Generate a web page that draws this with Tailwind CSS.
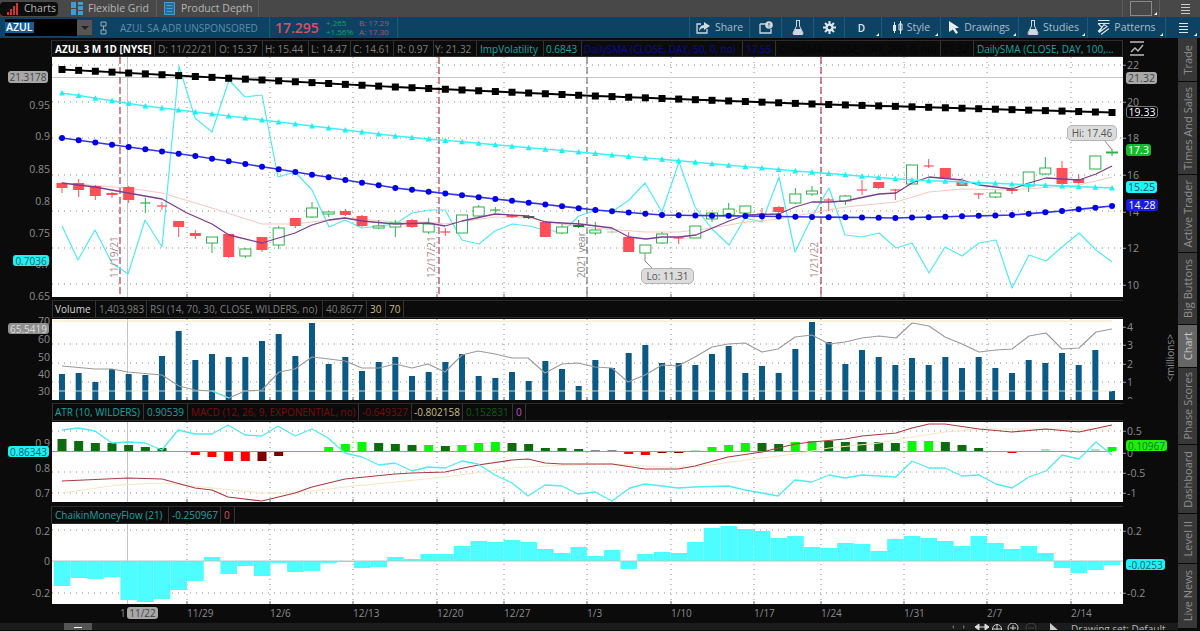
<!DOCTYPE html>
<html lang="en">
<head>
<meta charset="utf-8">
<title>Charts</title>
<script src="https://cdn.jsdelivr.net/npm/@tailwindcss/browser@4"></script>
</head>
<body class="w-[1200px] h-[631px] overflow-hidden bg-[#0b0b0b] font-['Open_Sans'] text-[10px] leading-none">

<!-- top tabs -->
<div class="flex items-center h-[17px] bg-[#484848] text-[#b5b5b5] text-[10.500px]">
  <div class="flex items-center gap-[5px] w-[58px] h-[14px] pl-[6px] bg-[#0d0d0d] rounded-[4px]">
    <svg class="w-[13px] h-[12px]" viewBox="0 0 13 12"><path d="M1 12V9h2v3zM4 12V6h2v6zM7 12V3h2v9zM10 12V0h2v12z" fill="#d9322e"/></svg>
    <span>Charts</span>
  </div>
  <div class="flex items-center gap-[5px] w-[99px] h-full pl-[13px] border-r border-[#5c5c5c]">
    <svg class="w-[12px] h-[13px]" viewBox="0 0 12 13"><path d="M0 0h5v6H0zM7 0h5v3H7zM7 4h5v4H7zM0 7h5v6H0zM7 9h5v4H7z" fill="#3d9ed6"/></svg>
    <span>Flexible Grid</span>
  </div>
  <div class="flex items-center gap-[6px] w-[102px] h-full pl-[7px] border-r border-[#5c5c5c]">
    <svg class="w-[11px] h-[13px]" viewBox="0 0 11 13"><path d="M.5.5h10v12H.5zM2.500 3.500h6M2.500 6.500h6M2.500 9.500h6" fill="#1f6f9f" stroke="#3d9ed6"/></svg>
    <span>Product Depth</span>
  </div>
  <div class="relative flex items-center justify-center ml-[863px] w-[38px] h-full border-x border-[#5c5c5c]">
    <div class="w-[22px] h-[15px] border border-[#8a8a8a]"></div>
    <div class="absolute right-[2px] bottom-[2px] w-0 h-0 border-l-[3px] border-l-transparent border-b-[3px] border-b-white"></div>
  </div>
  <div class="flex flex-col gap-[2px] ml-[21px] w-[9px]"><div class="h-px bg-[#ccc]"></div><div class="h-px bg-[#ccc]"></div><div class="h-px bg-[#ccc]"></div><div class="h-px bg-[#ccc]"></div></div>
</div>

<!-- symbol bar -->
<div class="flex items-center h-[21px] bg-[#0e4263] text-[#a9bdca] text-[10.500px]">
  <div class="flex items-center ml-[5px] w-[72px] h-[17px] bg-black"><span class="px-px bg-[#1b5c92] text-white font-semibold">AZUL</span></div>
  <div class="flex items-center justify-center w-[15px] h-[15px] bg-[#555]"><div class="w-0 h-0 border-x-[4px] border-x-transparent border-t-[4px] border-t-[#222]"></div></div>
  <svg class="ml-[8px] w-[7px] h-[14px]" viewBox="0 0 7 14"><path d="M1 1h5v4H1zM1 9h5v4H1zM3.500 5v4" fill="none" stroke="#9ab" stroke-width="1"/></svg>
  <div class="ml-[13px] w-[150px] h-[21px] flex items-center border-r border-[#225878] text-[#5d8dab] text-[10px] whitespace-nowrap">AZUL SA ADR UNSPONSORED</div>
  <div class="ml-[5px] w-[51px] text-[#d9505f] text-[14px] font-semibold">17.295</div>
  <div class="flex flex-col gap-px w-[33px] text-[8px] text-[#1f9d6a]"><span>+.265</span><span>+1.56%</span></div>
  <div class="flex flex-col gap-px w-[39px] h-[21px] justify-center border-r border-[#225878] text-[8px] text-[#a8566f]"><span>B: 17.29</span><span>A: 17.30</span></div>
  <div class="flex ml-auto h-full items-center">
    <div class="flex items-center justify-center gap-[5px] w-[61px] h-full border-x border-[#225878]">
      <svg class="w-[14px] h-[12px]" viewBox="0 0 14 12"><path d="M5 2H1v9h10V7" fill="none" stroke="#cfd8de" stroke-width="1.300"/><path d="M8 0l6 4-6 4V6C6 6 4 7 3 9c0-3 2-6 5-6z" fill="#cfd8de"/></svg>
      <span>Share</span>
    </div>
    <div class="flex items-center justify-center w-[32px] h-full border-r border-[#225878]">
      <svg class="w-[14px] h-[13px]" viewBox="0 0 14 13"><path d="M1 3h7M1 3v9h11V8" fill="none" stroke="#cfd8de" stroke-width="1.300"/><circle cx="10" cy="4" r="3.800" fill="#cfd8de"/><path d="M10 2v2.500M10 5.500v.8" stroke="#0e4263"/></svg>
    </div>
    <div class="flex items-center justify-center w-[32px] h-full border-r border-[#225878]">
      <svg class="w-[12px] h-[15px]" viewBox="0 0 12 15"><path d="M4 .5h4M4.500 1v5L1 13q0 1.500 1 1.500h8q1 0 1-1.500L7.500 6V1" fill="none" stroke="#cfd8de"/><path d="M3 9h6l2 5.500H1z" fill="#cfd8de"/></svg>
    </div>
    <div class="flex items-center justify-center w-[31px] h-full border-r border-[#225878]">
      <svg class="w-[13px] h-[13px]" viewBox="0 0 13 13"><path d="M6.500 0v13M0 6.500h13M2 2l9 9M11 2l-9 9" stroke="#dfe6ea" stroke-width="2"/><circle cx="6.500" cy="6.500" r="4" fill="#dfe6ea"/><circle cx="6.500" cy="6.500" r="1.800" fill="#0e4263"/></svg>
    </div>
    <div class="relative flex items-center justify-center w-[37px] h-full border-r border-[#225878] text-[#dfe6ea] font-semibold text-[10px] pr-[3px]">D<div class="absolute right-[2px] bottom-[2px] w-0 h-0 border-l-[3px] border-l-transparent border-b-[3px] border-b-white"></div></div>
    <div class="relative flex items-center justify-center gap-[4px] w-[59px] h-full border-r border-[#225878]">
      <svg class="w-[11px] h-[13px]" viewBox="0 0 11 13"><path d="M2.500 1v11" stroke="#dfe6ea"/><path d="M1 4h3v6H1z" fill="#dfe6ea"/><path d="M8.500 0v13" stroke="#dfe6ea"/><path d="M7 3h3v6H7z" fill="none" stroke="#dfe6ea"/></svg>
      <span>Style</span><div class="absolute right-[2px] bottom-[2px] w-0 h-0 border-l-[3px] border-l-transparent border-b-[3px] border-b-white"></div>
    </div>
    <div class="relative flex items-center justify-center gap-[5px] w-[78px] h-full border-r border-[#225878]">
      <svg class="w-[10px] h-[13px]" viewBox="0 0 10 13"><path d="M0 0l10 6.500-4 1 3 4-2 1.500-3-4.500L0 11z" fill="#e6edf0"/></svg>
      <span>Drawings</span><div class="absolute right-[2px] bottom-[2px] w-0 h-0 border-l-[3px] border-l-transparent border-b-[3px] border-b-white"></div>
    </div>
    <div class="relative flex items-center justify-center gap-[4px] w-[69px] h-full border-r border-[#225878]">
      <svg class="w-[12px] h-[15px]" viewBox="0 0 12 15"><path d="M4 .5h4M4.500 1v5L1 13q0 1.500 1 1.500h8q1 0 1-1.500L7.500 6V1" fill="none" stroke="#cfd8de"/><path d="M3 9h6l2 5.500H1z" fill="#cfd8de"/></svg>
      <span>Studies</span><div class="absolute right-[2px] bottom-[2px] w-0 h-0 border-l-[3px] border-l-transparent border-b-[3px] border-b-white"></div>
    </div>
    <div class="relative flex items-center justify-center gap-[4px] w-[78px] h-full border-r border-[#225878]">
      <svg class="w-[13px] h-[15px]" viewBox="0 0 13 15"><path d="M1 .5h11.500M1 3.500h11.500M1 3.500l4 4 2-3 3 2-8 6 3-5-4 4M4 14.500l8-6" fill="none" stroke="#dfe6ea" stroke-width="1.100"/></svg>
      <span>Patterns</span><div class="absolute right-[2px] bottom-[2px] w-0 h-0 border-l-[3px] border-l-transparent border-b-[3px] border-b-white"></div>
    </div>
    <div class="relative flex flex-col items-center justify-center gap-[2px] w-[34px] h-full">
      <div class="w-[9px] h-px bg-[#dfe6ea]"></div><div class="w-[9px] h-px bg-[#dfe6ea]"></div><div class="w-[9px] h-px bg-[#dfe6ea]"></div><div class="w-[9px] h-px bg-[#dfe6ea]"></div>
      <div class="absolute right-[3px] bottom-[2px] w-0 h-0 border-l-[3px] border-l-transparent border-b-[3px] border-b-white"></div>
    </div>
  </div>
</div>

<div class="flex h-[593px]">
  <!-- chart stack -->
  <div class="flex flex-col w-[1178px]">

    <!-- price header -->
    <div class="flex h-[17px] mt-[2px]">
      <div class="w-[51px]"></div>
      <div class="flex w-[1072px] h-full text-[#7d7d7d] border-y border-[#2c2c2c] whitespace-nowrap overflow-hidden">
        <div class="flex items-center w-[104px] pl-[3px] border-x border-[#333] text-white font-bold text-[10px]">AZUL 3 M 1D [NYSE]</div>
        <div class="flex items-center w-[61px] pl-[3px] border-r border-[#333]">D: 11/22/21</div>
        <div class="flex items-center w-[47px] pl-[3px] border-r border-[#333]">O: 15.37</div>
        <div class="flex items-center w-[46px] pl-[2px] border-r border-[#333]">H: 15.44</div>
        <div class="flex items-center w-[42px] pl-[2px] border-r border-[#333]">L: 14.47</div>
        <div class="flex items-center w-[43px] pl-[2px] border-r border-[#333]">C: 14.61</div>
        <div class="flex items-center w-[40px] pl-[3px] border-r border-[#333]">R: 0.97</div>
        <div class="flex items-center w-[43px] pl-[1px] border-r border-[#333]">Y: 21.32</div>
        <div class="flex items-center w-[67px] pl-[3px] border-r border-[#333] text-[#12a5a5]">ImpVolatility</div>
        <div class="flex items-center w-[38px] pl-[2px] border-r border-[#333] text-[#12a5a5]">0.6843</div>
        <div class="flex items-center w-[161px] pl-[2px] border-r border-[#333] text-[#0b0b96]">DailySMA (CLOSE, DAY, 50, 0, no)</div>
        <div class="flex items-center w-[33px] pl-[3px] border-r border-[#333] text-[#0b0b96]">17.55</div>
        <div class="flex items-center w-[165px] pl-[3px] border-r border-[#333] text-[#050505]">DailySMA (CLOSE, DAY, 200, 0, no)</div>
        <div class="flex items-center w-[33px] pl-[2px] border-r border-[#333] text-[#050505]">21.32</div>
        <div class="flex items-center flex-1 pl-[3px] border-r border-[#333] text-[#12a5a5]">DailySMA (CLOSE, DAY, 100,...</div>
      </div>
      <div class="flex items-center pl-[7px]">
        <svg class="w-[14px] h-[15px]" viewBox="0 0 14 15"><path d="M0 1h14M0 14h14M1 11l4-4 3 3 5-6" fill="none" stroke="#bdbdbd" stroke-width="1.300"/></svg>
      </div>
    </div>

    <!-- price panel -->
    <div class="flex h-[240px]">
      <div class="relative w-[52px] text-[#8c8c8c] text-[10.500px]">
        <div class="absolute right-[2px] top-[48px] -translate-y-1/2">0.95</div>
        <div class="absolute right-[2px] top-[79px] -translate-y-1/2">0.9</div>
        <div class="absolute right-[2px] top-[112px] -translate-y-1/2">0.85</div>
        <div class="absolute right-[2px] top-[144px] -translate-y-1/2">0.8</div>
        <div class="absolute right-[2px] top-[176px] -translate-y-1/2">0.75</div>
        <div class="absolute right-[2px] top-[207px] -translate-y-1/2">0.7</div>
        <div class="absolute right-[2px] top-[239px] -translate-y-1/2">0.65</div>
        <div class="absolute left-[8px] top-[14px] w-[40px] h-[12px] flex items-center justify-center rounded-[3px] bg-[#a8a8a8] text-[#444] text-[10px]">21.3178</div>
        <div class="absolute left-[13px] top-[198px] w-[36px] h-[11px] flex items-center justify-center rounded-[3px] bg-[#1ff0f5] text-[#166] text-[10px]">0.7036</div>
      </div>
      <div class="relative w-[1071px] bg-white overflow-hidden">
        <svg id="p1" class="absolute inset-0 w-full h-full" viewBox="52 57 1071 240">
          <g font-size="10" fill="#b08a8a">
            <text transform="translate(118,278) rotate(-90)">11/19/21</text>
            <text transform="translate(435,278) rotate(-90)">12/17/21</text>
            <text transform="translate(818,278) rotate(-90)">1/21/22</text>
            <text transform="translate(585,278) rotate(-90)" fill="#888">2021 year</text>
          </g>
        </svg>
        <div class="absolute left-[1015px] top-[68px] w-[50px] h-[16px] flex items-center justify-center rounded-[5px] bg-[#dcdcdc] border border-[#b5b5b5] text-[#555] text-[10px]">Hi: 17.46</div>
        <div class="absolute left-[589px] top-[211px] w-[53px] h-[16px] flex items-center justify-center rounded-[5px] bg-[#dcdcdc] border border-[#b5b5b5] text-[#555] text-[10px]">Lo: 11.31</div>
      </div>
      <div class="relative w-[55px] text-[#8c8c8c] text-[10.500px]">
        <div class="absolute left-0 top-[8px] -translate-y-1/2 flex items-center gap-[1px]"><span class="w-[3px] h-px bg-[#999]"></span><span>22</span></div>
        <div class="absolute left-0 top-[45px] -translate-y-1/2 flex items-center gap-[1px]"><span class="w-[3px] h-px bg-[#999]"></span><span>20</span></div>
        <div class="absolute left-0 top-[81px] -translate-y-1/2 flex items-center gap-[1px]"><span class="w-[3px] h-px bg-[#999]"></span><span>18</span></div>
        <div class="absolute left-0 top-[118px] -translate-y-1/2 flex items-center gap-[1px]"><span class="w-[3px] h-px bg-[#999]"></span><span>16</span></div>
        <div class="absolute left-0 top-[155px] -translate-y-1/2 flex items-center gap-[1px]"><span class="w-[3px] h-px bg-[#999]"></span><span>14</span></div>
        <div class="absolute left-0 top-[191px] -translate-y-1/2 flex items-center gap-[1px]"><span class="w-[3px] h-px bg-[#999]"></span><span>12</span></div>
        <div class="absolute left-0 top-[228px] -translate-y-1/2 flex items-center gap-[1px]"><span class="w-[3px] h-px bg-[#999]"></span><span>10</span></div>
        <div class="absolute left-[3px] top-[15px] w-[31px] h-[12px] flex items-center justify-center rounded-[3px] bg-[#a8a8a8] text-[#444] text-[10.500px]">21.32</div>
        <div class="absolute left-[3px] top-[49px] w-[32px] h-[12px] flex items-center justify-center rounded-[3px] bg-black border border-[#777] text-white text-[10.500px]">19.33</div>
        <div class="absolute left-[3px] top-[87px] w-[25px] h-[12px] flex items-center justify-center rounded-[3px] bg-[#16b82e] text-white text-[10.500px]">17.3</div>
        <div class="absolute left-[3px] top-[124px] w-[31px] h-[12px] flex items-center justify-center rounded-[3px] bg-[#1ff5f5] text-[#156] text-[10.500px]">15.25</div>
        <div class="absolute left-[3px] top-[142px] w-[32px] h-[12px] flex items-center justify-center rounded-[3px] bg-[#1a1ae6] text-white text-[10.500px]">14.28</div>
      </div>
    </div>

    <!-- volume header -->
    <div class="flex h-[18px] mt-[3px]">
      <div class="w-[52px]"></div>
      <div class="flex w-[1071px] h-full text-[#7d7d7d] border-y border-[#2c2c2c] whitespace-nowrap">
        <div class="flex items-center w-[44px] pl-[2px] border-x border-[#333] text-[#d5d5d5]">Volume</div>
        <div class="flex items-center w-[51px] pl-[3px] border-r border-[#333]">1,403,983</div>
        <div class="flex items-center w-[176px] pl-[3px] border-r border-[#333]">RSI (14, 70, 30, CLOSE, WILDERS, no)</div>
        <div class="flex items-center w-[44px] pl-[3px] border-r border-[#333]">40.8677</div>
        <div class="flex items-center w-[19px] pl-[3px] border-r border-[#333] text-[#c8bd85]">30</div>
        <div class="flex items-center w-[18px] pl-[3px] border-r border-[#333] text-[#c8bd85]">70</div>
      </div>
    </div>

    <!-- volume panel -->
    <div class="flex h-[81px] mt-[1px]">
      <div class="relative w-[52px] text-[#8c8c8c] text-[10.500px]">
        <div class="absolute right-[2px] top-[2px] -translate-y-1/2">70</div>
        <div class="absolute right-[2px] top-[20px] -translate-y-1/2">60</div>
        <div class="absolute right-[2px] top-[38px] -translate-y-1/2">50</div>
        <div class="absolute right-[2px] top-[55px] -translate-y-1/2">40</div>
        <div class="absolute right-[2px] top-[72px] -translate-y-1/2">30</div>
        <div class="absolute left-[8px] top-[4px] w-[41px] h-[11px] flex items-center justify-center rounded-[3px] bg-[#8f8f8f] text-[#ddd] text-[10px]">65.5419</div>
      </div>
      <div class="relative w-[1071px] bg-white overflow-hidden"><svg id="p2" class="absolute inset-0 w-full h-full" viewBox="52 319 1071 81"></svg></div>
      <div class="relative w-[55px] text-[#8c8c8c] text-[10.500px]">
        <div class="absolute left-0 top-[8px] -translate-y-1/2 flex items-center gap-[1px]"><span class="w-[3px] h-px bg-[#999]"></span><span>4</span></div>
        <div class="absolute left-0 top-[26px] -translate-y-1/2 flex items-center gap-[1px]"><span class="w-[3px] h-px bg-[#999]"></span><span>3</span></div>
        <div class="absolute left-0 top-[45px] -translate-y-1/2 flex items-center gap-[1px]"><span class="w-[3px] h-px bg-[#999]"></span><span>2</span></div>
        <div class="absolute left-0 top-[63px] -translate-y-1/2 flex items-center gap-[1px]"><span class="w-[3px] h-px bg-[#999]"></span><span>1</span></div>
        <div class="absolute left-[4px] top-[77px] h-[3px] overflow-hidden">0</div>
        <div class="absolute left-[42px] top-[15px] [writing-mode:vertical-rl] rotate-180 text-[10px]">&lt;millions&gt;</div>
      </div>
    </div>

    <!-- ATR header -->
    <div class="flex h-[18px] mt-[3px]">
      <div class="w-[52px]"></div>
      <div class="flex w-[1071px] h-full text-[#7d7d7d] border-y border-[#2c2c2c] whitespace-nowrap">
        <div class="flex items-center w-[92px] pl-[2px] border-x border-[#333] text-[#12a5a5]">ATR (10, WILDERS)</div>
        <div class="flex items-center w-[44px] pl-[3px] border-r border-[#333] text-[#12a5a5]">0.90539</div>
        <div class="flex items-center w-[171px] pl-[3px] border-r border-[#333] text-[#7a0c0c]">MACD (12, 26, 9, EXPONENTIAL, no)</div>
        <div class="flex items-center w-[53px] pl-[3px] border-r border-[#333] text-[#7a0c0c]">-0.649327</div>
        <div class="flex items-center w-[51px] pl-[2px] border-r border-[#333] text-[#c8bd85]">-0.802158</div>
        <div class="flex items-center w-[50px] pl-[3px] border-r border-[#333] text-[#0f5c14]">0.152831</div>
        <div class="flex items-center w-[13px] pl-[3px] border-r border-[#333] text-[#c255c2]">0</div>
      </div>
    </div>

    <!-- ATR panel -->
    <div class="flex h-[80px] mt-[1px]">
      <div class="relative w-[52px] text-[#8c8c8c] text-[10.500px]">
        <div class="absolute right-[2px] top-[21px] -translate-y-1/2">0.9</div>
        <div class="absolute right-[2px] top-[46px] -translate-y-1/2">0.8</div>
        <div class="absolute right-[2px] top-[71px] -translate-y-1/2">0.7</div>
        <div class="absolute left-[8px] top-[24px] w-[41px] h-[11px] flex items-center justify-center rounded-[3px] bg-[#1ff0f5] text-[#166] text-[10px]">0.86343</div>
      </div>
      <div class="relative w-[1071px] bg-white overflow-hidden"><svg id="p3" class="absolute inset-0 w-full h-full" viewBox="52 422 1071 80"></svg></div>
      <div class="relative w-[55px] text-[#8c8c8c] text-[10.500px]">
        <div class="absolute left-0 top-[9px] -translate-y-1/2 flex items-center gap-[1px]"><span class="w-[3px] h-px bg-[#999]"></span><span>0.5</span></div>
        <div class="absolute left-0 top-[31px] -translate-y-1/2 flex items-center gap-[1px]"><span class="w-[3px] h-px bg-[#999]"></span><span>0</span></div>
        <div class="absolute left-0 top-[51px] -translate-y-1/2 flex items-center gap-[1px]"><span class="w-[3px] h-px bg-[#999]"></span><span>-0.5</span></div>
        <div class="absolute left-0 top-[71px] -translate-y-1/2 flex items-center gap-[1px]"><span class="w-[3px] h-px bg-[#999]"></span><span>-1</span></div>
        <div class="absolute left-[3px] top-[18px] w-[41px] h-[11px] flex items-center justify-center rounded-[3px] bg-[#22ee00] text-[#174] text-[10px]">0.10967</div>
      </div>
    </div>

    <!-- CMF header -->
    <div class="flex h-[18px] mt-[4px]">
      <div class="w-[51px]"></div>
      <div class="flex w-[1072px] h-full text-[#12a5a5] border-y border-[#2c2c2c] whitespace-nowrap">
        <div class="flex items-center w-[118px] pl-[3px] border-x border-[#333]">ChaikinMoneyFlow (21)</div>
        <div class="flex items-center w-[52px] pl-[3px] border-r border-[#333]">-0.250967</div>
        <div class="flex items-center w-[14px] pl-[3px] border-r border-[#333] text-[#d9505f]">0</div>
      </div>
    </div>

    <!-- CMF panel -->
    <div class="flex h-[80px]">
      <div class="relative w-[52px] text-[#8c8c8c] text-[10.500px]">
        <div class="absolute right-[2px] top-[7px] -translate-y-1/2">0.2</div>
        <div class="absolute right-[2px] top-[37px] -translate-y-1/2">0</div>
        <div class="absolute right-[2px] top-[69px] -translate-y-1/2">-0.2</div>
      </div>
      <div class="relative w-[1071px] bg-white overflow-hidden"><svg id="p4" class="absolute inset-0 w-full h-full" viewBox="52 524 1071 80"></svg></div>
      <div class="relative w-[55px] text-[#8c8c8c] text-[10.500px]">
        <div class="absolute left-0 top-[7px] -translate-y-1/2 flex items-center gap-[1px]"><span class="w-[3px] h-px bg-[#999]"></span><span>0.2</span></div>
        <div class="absolute left-0 top-[69px] -translate-y-1/2 flex items-center gap-[1px]"><span class="w-[3px] h-px bg-[#999]"></span><span>-0.2</span></div>
        <div class="absolute left-[3px] top-[35px] w-[39px] h-[11px] flex items-center justify-center rounded-[3px] bg-[#1ff0f5] text-[#166] text-[10px]">-0.0253</div>
      </div>
    </div>

    <!-- date axis -->
    <div class="relative h-[19px] text-[#8c8c8c] text-[10px]">
      <span class="absolute left-[120px] top-[4px]">1</span>
      <span class="absolute left-[127px] top-[3px] w-[31px] h-[12px] flex items-center justify-center rounded-[3px] bg-[#a8a8a8] text-[#444]">11/22</span>
      <span class="absolute left-[187px] top-[4px]">11/29</span>
      <span class="absolute left-[270px] top-[4px]">12/6</span>
      <span class="absolute left-[353px] top-[4px]">12/13</span>
      <span class="absolute left-[437px] top-[4px]">12/20</span>
      <span class="absolute left-[504px] top-[4px]">12/27</span>
      <span class="absolute left-[587px] top-[4px]">1/3</span>
      <span class="absolute left-[671px] top-[4px]">1/10</span>
      <span class="absolute left-[754px] top-[4px]">1/17</span>
      <span class="absolute left-[821px] top-[4px]">1/24</span>
      <span class="absolute left-[904px] top-[4px]">1/31</span>
      <span class="absolute left-[987px] top-[4px]">2/7</span>
      <span class="absolute left-[1071px] top-[4px]">2/14</span>
    </div>

    <!-- bottom bar -->
    <div class="flex items-start h-[7px] bg-[#1c1c1c] text-[#b5b5b5] overflow-hidden">
      <div class="flex items-center justify-center ml-[64px] w-[28px] h-[8px] bg-[#555]"><div class="w-[8px] h-px bg-white"></div></div>
      <svg class="ml-[860px] w-[116px] h-[8px]" viewBox="0 0 116 8"><path d="M2 2L0 4l2 2zM11 2l2 2-2 2z" fill="#666"/><path d="M24 4h12M27 1L23 4l4 3zM33 1l4 3-4 3z" fill="#ddd" stroke="#ddd"/><circle cx="45" cy="6" r="4.500" fill="none" stroke="#ccc"/><path d="M45 1v10M40 6h10" stroke="#ccc"/><circle cx="61" cy="5" r="5" fill="none" stroke="#ccc"/><path d="M61 2v6M58 5h6" stroke="#ccc"/><circle cx="79" cy="5" r="5" fill="none" stroke="#444"/><path d="M76 5h6" stroke="#444"/><path d="M98 0l9 8H98z" fill="#ccc"/></svg>
      <span class="ml-[3px] mt-[1px] text-[10px] whitespace-nowrap">Drawing set: Default</span>
    </div>
  </div>

  <!-- right tabs -->
  <div class="flex flex-col w-[19px] h-[590px] gap-px text-[#8f8f8f] text-[11px] whitespace-nowrap">
    <div class="flex items-center justify-center h-[43px] bg-[#383838]"><span class="[writing-mode:vertical-rl] rotate-180">Trade</span></div>
    <div class="flex items-center justify-center h-[92px] bg-[#383838]"><span class="[writing-mode:vertical-rl] rotate-180">Times And Sales</span></div>
    <div class="flex items-center justify-center h-[77px] bg-[#383838]"><span class="[writing-mode:vertical-rl] rotate-180">Active Trader</span></div>
    <div class="flex items-center justify-center h-[71px] bg-[#383838]"><span class="[writing-mode:vertical-rl] rotate-180">Big Buttons</span></div>
    <div class="flex items-center justify-center h-[42px] bg-[#666] text-[#c8c8c8]"><span class="[writing-mode:vertical-rl] rotate-180">Chart</span></div>
    <div class="flex items-center justify-center h-[76px] bg-[#383838]"><span class="[writing-mode:vertical-rl] rotate-180">Phase Scores</span></div>
    <div class="flex items-center justify-center h-[68px] bg-[#383838]"><span class="[writing-mode:vertical-rl] rotate-180">Dashboard</span></div>
    <div class="flex items-center justify-center h-[49px] bg-[#383838]"><span class="[writing-mode:vertical-rl] rotate-180">Level II</span></div>
    <div class="flex items-center justify-center h-[64px] bg-[#383838]"><span class="[writing-mode:vertical-rl] rotate-180">Live News</span></div>
  </div>
</div>

<script>
const X=i=>62+i*16.667, GX=[187,270,353,437,504,587,671,754,821,904,987,1071];
const interp=(p)=>{const o=[];for(let i=0;i<64;i++){let k=0;while(k<p.length-2&&p[k+1][0]<i)k++;const a=p[k],b=p[k+1];o.push(a[1]+(b[1]-a[1])*(i-a[0])/(b[0]-a[0]));}return o;};
const pl=(pts,c,w,extra='')=>`<polyline fill="none" stroke="${c}" stroke-width="${w}" stroke-linejoin="round" ${extra} points="${pts.map(p=>p.join(',')).join(' ')}"/>`;
const grid=(y0,y1,hs)=>{let s='';hs.forEach(y=>s+=`<line x1="52" x2="1123" y1="${y}" y2="${y}" stroke="#8f8f8f" stroke-dasharray="1 5"/>`);GX.forEach(x=>s+=`<line x1="${x}" x2="${x}" y1="${y0}" y2="${y1}" stroke="#8f8f8f" stroke-dasharray="1 4"/><line x1="${x}" x2="${x}" y1="${y1-3}" y2="${y1}" stroke="#666"/>`);s+=`<line x1="127.500" x2="127.500" y1="${y0}" y2="${y1}" stroke="#c4c4c4"/>`;return s;};

/* price panel */
const c=[[183,188,182,193,'r'],[183,190,179,197,'r'],[186,196,185,200,'r'],[193,195,192,198,'r'],[187,200,186,203,'r'],[203,203,198,213,'g'],[206,206,202,210,'r'],[221,227,221,237,'r'],[233,236,230,239,'r'],[237,243,237,253,'g'],[234,257,234,258,'r'],[249,256,248,258,'g'],[237,250,237,252,'r'],[228,245,226,249,'g'],[218,226,218,228,'r'],[208,217,202,218,'g'],[212,214,211,217,'g'],[211,215,209,216,'r'],[216,226,215,227,'r'],[226,228,220,229,'g'],[223,227,220,237,'g'],[220,227,219,228,'r'],[224,232,218,234,'g'],[232,232,228,236,'r'],[215,233,215,233,'g'],[207,216,205,217,'g'],[210,210,207,213,'g'],[215,217,214,218,'r'],[216,218,215,219,'d'],[222,237,221,237,'r'],[227,233,224,234,'g'],[225,227,220,228,'d'],[230,233,222,235,'g'],[232,232,229,234,'p'],[237,252,232,252,'r'],[245,253,245,253,'g'],[234,243,232,244,'g'],[238,238,237,244,'r'],[226,238,226,238,'g'],[213,219,213,222,'g'],[209,215,203,217,'g'],[206,213,206,216,'g'],[214,214,208,220,'r'],[207,212,206,213,'r'],[194,203,188,204,'g'],[191,194,186,196,'g'],[200,200,198,211,'r'],[196,201,195,205,'g'],[190,190,180,195,'r'],[182,188,182,189,'r'],[190,190,189,200,'r'],[165,184,165,184,'g'],[166,166,159,168,'r'],[168,179,168,180,'r'],[182,186,178,186,'r'],[194,194,193,199,'r'],[193,197,190,198,'g'],[189,191,187,194,'r'],[172,186,172,192,'g'],[168,174,157,175,'g'],[168,184,161,184,'r'],[179,183,174,184,'r'],[156,169,156,169,'g'],[152,153,149,156,'g']];
const black=interp([[0,69.5],[20,87],[32,96],[45,104],[63,112.500]]),tri=interp([[0,93],[5,106],[20,136],[44,171],[51,180],[63,188]]),blue=interp([[0,138],[8,156],[20,188],[32,210],[36,215],[50,218],[57,215],[60,211],[63,206]]);
const iv=[[62,226],[78,260],[95,230],[112,263],[128,274],[145,220],[162,247],[179,66],[195,118],[212,132],[229,80],[245,97],[262,95],[278,177],[295,172],[312,190],[329,227],[345,220],[362,228],[379,226],[395,224],[412,213],[429,210],[445,210],[462,240],[479,244],[495,231],[512,224],[529,226],[545,230],[562,232],[579,216],[596,210],[612,212],[629,200],[645,183],[662,212],[679,162],[695,207],[712,229],[729,245],[745,218],[762,222],[779,177],[795,252],[812,217],[829,188],[845,235],[862,237],[879,233],[896,248],[912,243],[929,273],[945,247],[962,256],[979,243],[996,240],[1012,288],[1029,255],[1046,261],[1062,247],[1079,233],[1096,250],[1112,262]];
const pur=[[62,183],[95,187],[128,193],[162,199],[187,213],[212,224],[229,235],[262,243],[295,233],[312,225],[329,220],[345,218],[362,221],[395,224],[428,223],[445,226],[462,221],[495,214],[528,216],[545,222],[580,224],[612,228],[629,237],[646,239],[662,237],[679,237],[696,235],[729,221],[746,215],[779,214],[795,207],[812,202],[829,202],[845,201],[879,194],[896,193],[912,183],[929,177],[962,180],[979,185],[1012,189],[1029,183],[1046,178],[1079,180],[1096,174],[1112,166]];
const pink=[[62,183],[128,188],[162,193],[212,208],[262,224],[295,224],[345,218],[395,222],[428,222],[445,224],[495,217],[528,218],[580,227],[645,232],[679,232],[712,228],[746,222],[779,219],[845,207],[896,202],[929,192],[962,189],[1012,190],[1079,185],[1112,177]];
let s=grid(57,297,[65,102,138,175,211,248,284]);
s+=`<line x1="52" x2="1123" y1="77.500" y2="77.500" stroke="#c8c8c8"/>`;
[[120,'#b23a48'],[439,'#b23a48'],[821,'#b23a48'],[587,'#777']].forEach(([x,k])=>s+=`<line x1="${x}" x2="${x}" y1="57" y2="297" stroke="${k}" stroke-width="1.200" stroke-dasharray="7 3"/>`);
s+=pl(iv,'#52eaf2',1.200)+pl(pink,'#f6c9c3',1);
c.forEach((d,i)=>{const x=X(i),k={r:'#ff4f57',g:'#2fb04c',d:'#1d7a33',p:'#a9d8b2'}[d[4]];
  s+=`<line x1="${x}" x2="${x}" y1="${d[2]}" y2="${d[3]}" stroke="${k}" stroke-width="1"/>`;
  if(d[0]===d[1]) s+=`<line x1="${x-5}" x2="${x+5}" y1="${d[0]}" y2="${d[0]}" stroke="${k}" stroke-width="1.200"/>`;
  else if(d[4]==='g') s+=`<rect x="${x-5.500}" y="${d[0]}" width="11" height="${d[1]-d[0]}" fill="#fff" stroke="${k}"/>`;
  else s+=`<rect x="${x-5.500}" y="${d[0]}" width="11" height="${d[1]-d[0]}" fill="${k}"/>`;});
s+=pl(pur,'#7a3f8e',1.300);
s+=pl(tri.map((y,i)=>[X(i),y]),'#45eef5',1.500);
tri.forEach((y,i)=>s+=`<path d="M${X(i)-3} ${y+2.500}h6l-3-5.500z" fill="#1ff0f5"/>`);
s+=pl(blue.map((y,i)=>[X(i),y]),'#3535e0',1.600);
blue.forEach((y,i)=>s+=`<circle cx="${X(i)}" cy="${y}" r="3" fill="#0000e6"/>`);
s+=pl(black.map((y,i)=>[X(i),y]),'#000',2);
black.forEach((y,i)=>s+=`<rect x="${X(i)-3.500}" y="${y-3.500}" width="7" height="7" fill="#000"/>`);
s+=`<path d="M645 253v8l7 7M1105 141l7 9" fill="none" stroke="#8a8a8a"/>`;
document.getElementById('p1').insertAdjacentHTML('afterbegin',s);

/* volume panel */
const vol=[374,373,382,369,374,375,356,331,360,354,357,357,341,334,356,323,364,357,371,362,357,376,372,362,354,376,378,372,381,361,369,386,360,368,353,345,363,363,365,354,346,373,366,373,349,322,342,364,350,357,365,358,365,357,368,357,368,373,360,363,353,365,350,391];
const rsi=[[62,366],[95,369],[112,369],[128,372],[162,375],[179,386],[195,390],[212,391],[229,398],[245,391],[262,390],[279,372],[295,369],[312,357],[329,359],[345,361],[362,368],[379,368],[395,364],[412,368],[428,364],[445,372],[462,355],[478,351],[495,354],[512,358],[528,358],[545,373],[562,364],[578,363],[595,367],[612,368],[628,382],[645,375],[662,365],[678,366],[695,357],[712,347],[728,344],[745,343],[762,352],[778,349],[795,337],[812,335],[829,344],[845,342],[862,338],[879,336],[896,338],[912,323],[929,326],[945,337],[962,344],[979,352],[996,350],[1012,349],[1029,336],[1046,333],[1062,349],[1079,348],[1096,332],[1112,329]];
s=grid(319,400,[344,363,382]);
vol.forEach((y,i)=>s+=`<rect x="${X(i)-3}" y="${y}" width="6" height="${400-y}" fill="#0b5a86"/>`);
s+=`<line x1="52" x2="1112" y1="321" y2="321" stroke="#f3e6bd"/><line x1="52" x2="1112" y1="391" y2="391" stroke="#f3e6bd" stroke-opacity=".85"/>`;
s+=pl(rsi,'#9a9a9a',1.100)+pl([[212,391],[229,398]],'#52eaf2',1.100);
document.getElementById('p2').insertAdjacentHTML('afterbegin',s);

/* ATR / MACD panel */
const B='#0f6b0f',L='#0cf40c',R='#f00',D='#7a0000',P='#b8e0b8',G='#888';
const h=[[439,B],[441,B],[443,B],[443,B],[445,B],[447,B],[448,B],[452,R],[455,R],[457,R],[461,R],[461,R],[461,D],[456,D],[452,D],[451,G],[447,L],[444,L],[442,L],[443,B],[444,B],[445,B],[445,L],[446,B],[445,L],[443,L],[442,L],[443,B],[444,B],[448,B],[448,B],[449,B],[450,G],[450,G],[454,R],[455,R],[453,D],[453,D],[450,P],[447,L],[445,L],[443,L],[443,B],[444,B],[442,L],[441,L],[441,B],[442,B],[442,B],[442,B],[443,B],[441,L],[441,L],[442,B],[445,B],[448,B],[451,G],[453,R],[451,G],[449,P],[451,G],[452,R],[449,P],[447,L]];
const atr=[[62,430],[78,428],[95,431],[112,443],[128,442],[145,443],[162,450],[178,430],[195,434],[212,434],[228,425],[245,435],[262,436],[278,426],[295,436],[312,429],[328,438],[345,453],[362,457],[379,465],[395,463],[412,471],[428,467],[445,468],[462,461],[478,464],[495,475],[512,483],[528,496],[545,485],[562,486],[578,494],[595,492],[612,501],[630,488],[645,484],[662,486],[678,488],[695,487],[728,486],[745,490],[762,493],[778,496],[795,480],[812,482],[829,475],[845,478],[862,475],[896,477],[912,461],[929,468],[945,468],[962,476],[979,475],[996,484],[1012,488],[1029,477],[1046,471],[1062,455],[1079,459],[1096,442],[1112,455]];
const macd=[[62,481],[128,478],[162,479],[195,488],[212,490],[228,497],[262,501],[295,493],[312,487],[345,479],[395,474],[412,473],[445,472],[478,465],[512,460],[528,459],[545,463],[562,464],[612,464],[645,469],[678,469],[695,466],[728,457],[762,452],[795,444],[812,442],[845,439],[862,436],[896,433],[912,428],[929,424],[945,424],[979,429],[1012,432],[1046,429],[1079,432],[1112,425]];
const sig=[[62,493],[117,485],[162,483],[212,488],[262,493],[295,493],[345,487],[395,482],[445,477],[512,468],[545,466],[612,464],[662,467],[695,467],[762,458],[795,454],[829,448],[879,443],[912,437],[945,432],[979,429],[1112,429]];
s=grid(422,502,[431,472,493]);
h.forEach((a,i)=>{const [y,k]=a,t=Math.min(y,451),hh=Math.max(Math.abs(y-451),1);s+=`<rect x="${X(i)-4.500}" y="${t}" width="9" height="${hh}" fill="${k}"/>`;});
s+=`<line x1="52" x2="1112" y1="451.500" y2="451.500" stroke="#d86cd8"/>`;
s+=pl(sig,'#f6e6c4',1)+pl(macd,'#a83c42',1.200)+pl(atr,'#52eaf2',1.300);
document.getElementById('p3').insertAdjacentHTML('afterbegin',s);

/* CMF panel */
const cmf=[586,578,579,577,600,602,599,590,581,557,574,566,576,563,572,571,563,562,568,567,557,559,554,554,546,541,542,540,542,549,553,547,556,550,569,554,552,553,542,528,526,529,531,538,536,547,548,543,544,551,539,536,538,541,546,536,543,549,546,553,568,573,570,565];
s=grid(524,604,[530,593]);
cmf.forEach((y,i)=>{const t=Math.min(y,561),k=i==17?'#ffb0a8':'#4dfdff';s+=`<rect x="${X(i)-8.200}" y="${t}" width="16.600" height="${Math.abs(y-561)||1}" fill="${k}"/>`;});
s+=`<line x1="52" x2="1123" y1="561" y2="561" stroke="#b5c5c5"/>`;
document.getElementById('p4').insertAdjacentHTML('afterbegin',s);
</script>
</body>
</html>
